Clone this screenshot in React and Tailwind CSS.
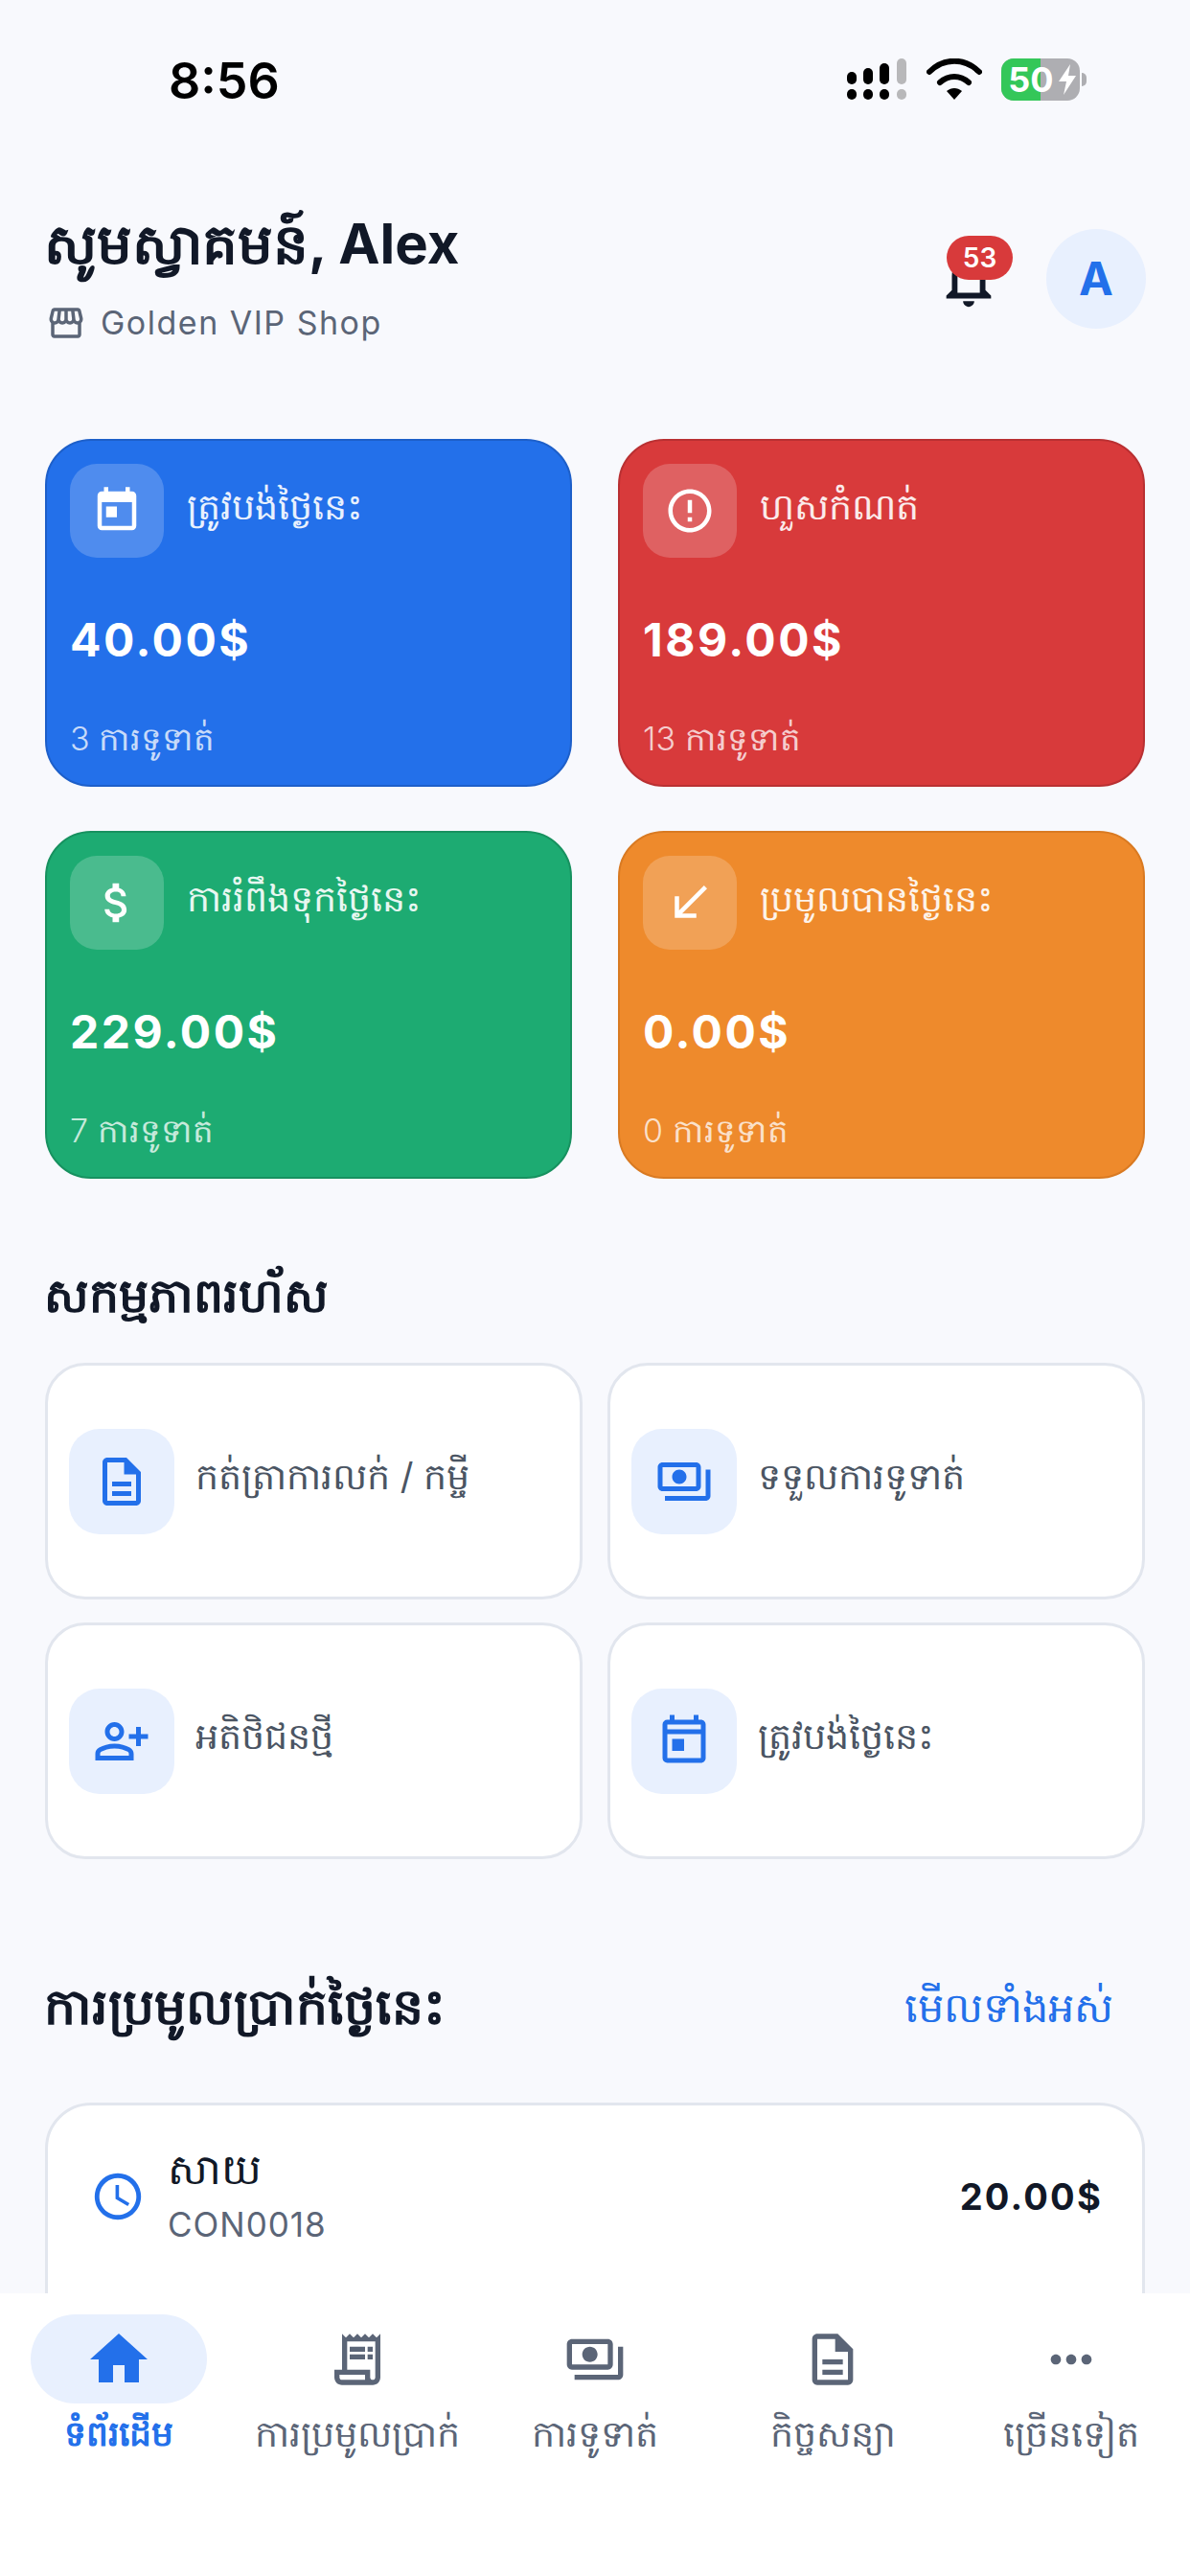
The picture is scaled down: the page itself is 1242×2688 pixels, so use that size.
import {
    MdToday,
    MdErrorOutline,
    MdAttachMoney,
    MdSouthWest,
    MdOutlineDescription,
    MdOutlinePayments,
    MdOutlinePersonAddAlt,
    MdOutlineToday,
    MdAccessTime,
    MdHome,
    MdOutlineReceiptLong,
    MdMoreHoriz,
    MdOutlineStorefront,
    MdOutlineNotifications,
} from "react-icons/md";

const stats = [
    { label: "ត្រូវបង់ថ្ងៃនេះ", value: "40.00$", sub: "3 ការទូទាត់", Icon: MdToday, cls: "bg-[#2370ea] border-[#1d5fc9]" },
    { label: "ហួសកំណត់", value: "189.00$", sub: "13 ការទូទាត់", Icon: MdErrorOutline, cls: "bg-[#d83a3b] border-[#b93032]" },
    { label: "ការរំពឹងទុកថ្ងៃនេះ", value: "229.00$", sub: "7 ការទូទាត់", Icon: MdAttachMoney, cls: "bg-[#1dab72] border-[#17915f]" },
    { label: "ប្រមូលបានថ្ងៃនេះ", value: "0.00$", sub: "0 ការទូទាត់", Icon: MdSouthWest, cls: "bg-[#ee8a2c] border-[#d97a22]" },
];

const actions = [
    { label: "កត់ត្រាការលក់ / កម្ចី", Icon: MdOutlineDescription },
    { label: "ទទួលការទូទាត់", Icon: MdOutlinePayments },
    { label: "អតិថិជនថ្មី", Icon: MdOutlinePersonAddAlt },
    { label: "ត្រូវបង់ថ្ងៃនេះ", Icon: MdOutlineToday },
];

const tabs = [
    { label: "ទំព័រដើម", Icon: MdHome, active: true },
    { label: "ការប្រមូលប្រាក់", Icon: MdOutlineReceiptLong },
    { label: "ការទូទាត់", Icon: MdOutlinePayments },
    { label: "កិច្ចសន្យា", Icon: MdOutlineDescription },
    { label: "ច្រើនទៀត", Icon: MdMoreHoriz },
];

function StatusBar() {
    return (
        <div className="flex h-[170px] items-start justify-between pl-[176px] pr-[108px] pt-[53px]">
            <span className="text-[52px] leading-[64px] font-semibold text-black">8:56</span>
            <div className="flex items-center gap-[20px] pt-[8px]">
                <svg width="64" height="44" viewBox="0 0 64 44" fill="currentColor" className="text-black">
                    <rect x="1" y="14" width="10" height="13" rx="5" />
                    <rect x="1" y="32" width="10" height="11" rx="5" />
                    <rect x="18" y="10" width="10" height="17" rx="5" />
                    <rect x="18" y="32" width="10" height="11" rx="5" />
                    <rect x="35" y="5" width="10" height="22" rx="5" />
                    <rect x="35" y="32" width="10" height="11" rx="5" />
                    <rect x="53" y="0" width="10" height="27" rx="5" fill="#b8b8ba" />
                    <rect x="53" y="32" width="10" height="11" rx="5" fill="#b8b8ba" />
                </svg>
                <svg width="58" height="44" viewBox="0 0 58 44" fill="none" stroke="currentColor" strokeWidth="6" strokeLinecap="round" className="text-black">
                    <path d="M3 14C18 -1 40 -1 55 14" />
                    <path d="M14 25C23 17 35 17 44 25" />
                    <path d="M29 43L21 34C26 30 32 30 37 34Z" fill="currentColor" stroke="none" />
                </svg>
                <div className="relative flex h-[44px] w-[82px] items-center justify-center overflow-hidden rounded-[13px] bg-[#aeaeb2]">
                    <div className="absolute inset-y-0 left-0 w-[41px] bg-[#34c759]" />
                    <span className="relative mr-[20px] text-[36px] leading-none font-bold text-white">50</span>
                    <svg width="22" height="32" viewBox="0 0 22 32" fill="white" className="absolute right-[2px] top-[6px]">
                        <path d="M14 0L2 18H10L7 32L20 12H12Z" />
                    </svg>
                </div>
                <div className="-ml-[18px] h-[14px] w-[5px] rounded-r-full bg-[#aeaeb2]" />
            </div>
        </div>
    );
}

function Header() {
    return (
        <div className="flex items-start justify-between pl-[46px] pr-[46px] pt-[46px]">
            <div>
                <h1 className="text-[58px] leading-[76px] font-bold text-[#111827]">សូមស្វាគមន៍, Alex</h1>
                <div className="mt-[23px] flex items-center gap-[15px] pl-[2px] text-[#5b6577]">
                    <MdOutlineStorefront size={42} />
                    <span className="text-[34px] leading-[44px] tracking-[1.5px]">Golden VIP Shop</span>
                </div>
            </div>
            <div className="mt-[23px] flex items-center gap-[46px]">
                <div className="relative h-[70px] w-[70px]">
                    <MdOutlineNotifications size={70} className="text-[#111827]" />
                    <span className="absolute -top-[10px] left-[12px] flex h-[46px] w-[69px] items-center justify-center rounded-full bg-[#d83a3b] text-[28px] font-semibold text-white">53</span>
                </div>
                <div className="flex h-[104px] w-[104px] items-center justify-center rounded-full bg-[#e8f0fe] text-[48px] font-bold text-[#2370ea]">A</div>
            </div>
        </div>
    );
}

function StatCard({ label, value, sub, Icon, cls }) {
    return (
        <div className={`h-[363px] rounded-[48px] border-2 px-[24px] pt-[24px] text-white ${cls}`}>
            <div className="flex items-start gap-[24px]">
                <div className="flex h-[98px] w-[98px] shrink-0 items-center justify-center rounded-[28px] bg-white/20">
                    <Icon size={54} />
                </div>
                <span className="mt-[14px] text-[38px] leading-[60px] font-light text-white/90">{label}</span>
            </div>
            <div className="mt-[56px] text-[48px] leading-[60px] font-bold tracking-[2.5px]">{value}</div>
            <div className="mt-[49px] text-[34px] leading-[48px] font-light text-white/75">{sub}</div>
        </div>
    );
}

function ActionCard({ label, Icon }) {
    return (
        <div className="flex h-[247px] items-center gap-[22px] rounded-[42px] border-[3px] border-[#e2e6ee] bg-white pl-[22px]">
            <div className="flex h-[110px] w-[110px] shrink-0 items-center justify-center rounded-[32px] bg-[#e8f0fe] text-[#2370ea]">
                <Icon size={60} />
            </div>
            <span className="-mt-[12px] text-[38px] leading-[56px] text-[#4b5563]">{label}</span>
        </div>
    );
}

function BottomNav() {
    return (
        <div className="fixed inset-x-0 bottom-0 flex h-[295px] bg-white pt-[22px]">
            {tabs.map(({ label, Icon, active }) => (
                <div key={label} className="flex flex-1 flex-col items-center">
                    <div className={`flex h-[93px] w-[184px] items-center justify-center rounded-full ${active ? "bg-[#e8f0fe] text-[#2370ea]" : "text-[#5b6577]"}`}>
                        <Icon size={active ? 72 : 64} />
                    </div>
                    <span className={`mt-[6px] leading-[50px] whitespace-nowrap ${active ? "text-[36px] font-semibold text-[#2370ea]" : "text-[38px] font-light text-[#5b6577]"}`}>{label}</span>
                </div>
            ))}
        </div>
    );
}

export default function App() {
    return (
        <div className="h-[2688px] overflow-hidden bg-[#f8f9fd] font-['Inter','Noto_Sans',sans-serif]">
            <StatusBar />
            <Header />

            <div className="mt-[99px] grid grid-cols-2 gap-x-[48px] gap-y-[46px] px-[47px]">
                {stats.map((s) => (
                    <StatCard key={s.label} {...s} />
                ))}
            </div>

            <h2 className="mt-[78px] pl-[46px] text-[49px] leading-[88px] font-semibold text-[#111827]">សកម្មភាពរហ័ស</h2>
            <div className="mt-[26px] grid grid-cols-2 gap-x-[26px] gap-y-[24px] px-[47px]">
                {actions.map((a) => (
                    <ActionCard key={a.label} {...a} />
                ))}
            </div>

            <div className="mt-[110px] flex items-center justify-between pl-[46px] pr-[80px]">
                <h2 className="text-[52px] leading-[88px] font-semibold text-[#111827]">ការប្រមូលប្រាក់ថ្ងៃនេះ</h2>
                <span className="text-[43px] leading-[60px] font-medium text-[#2370ea]">មើលទាំងអស់</span>
            </div>

            <div className="mx-[47px] mt-[56px] h-[400px] rounded-[48px] border-[3px] border-[#e2e6ee] bg-white pl-[44px] pr-[41px] pt-[34px]">
                <div className="flex items-center justify-between">
                    <div className="flex items-center gap-[23px]">
                        <MdAccessTime size={58} className="text-[#2370ea]" />
                        <div className="pb-[8px]">
                            <div className="text-[44px] leading-[64px] font-medium text-[#111827]">សាយ</div>
                            <div className="mt-[2px] text-[35px] leading-[48px] tracking-[1px] text-[#5b6577]">CON0018</div>
                        </div>
                    </div>
                    <span className="text-[38px] font-bold tracking-[2.2px] text-[#111827]">20.00$</span>
                </div>
            </div>

            <BottomNav />
        </div>
    );
}
